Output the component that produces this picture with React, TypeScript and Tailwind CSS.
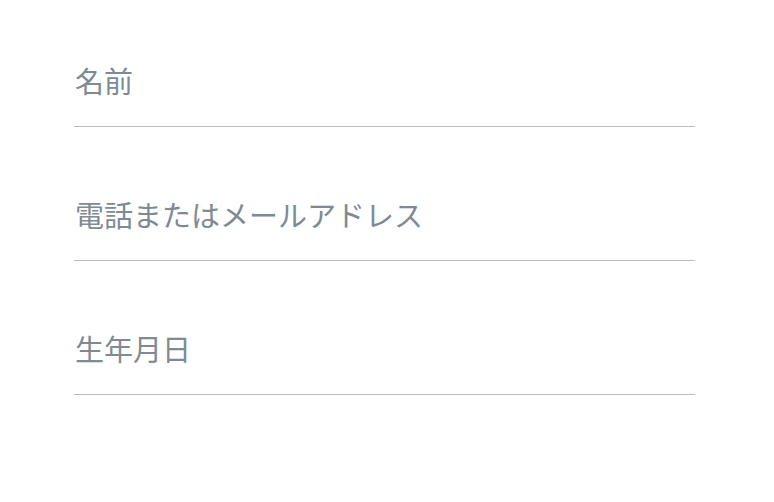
export default function App() {
  const fields = ["名前", "電話またはメールアドレス", "生年月日"];
  return (
    <div className="w-[774px] h-[502px] bg-white pt-[66px] pl-[74px]" style={{ fontFamily: '"Noto Sans CJK JP", "Noto Sans", sans-serif' }}>
      <div className="flex flex-col gap-[73px] w-[621px]">
        {fields.map((f) => (
          <div key={f} className="flex flex-col">
            <div className="text-[29px] leading-[29px] text-[#7e8a94] pl-[1px]">{f}</div>
            <div className="mt-[31px] h-[1px] bg-[#bcbcbc]" />
          </div>
        ))}
      </div>
    </div>
  );
}
